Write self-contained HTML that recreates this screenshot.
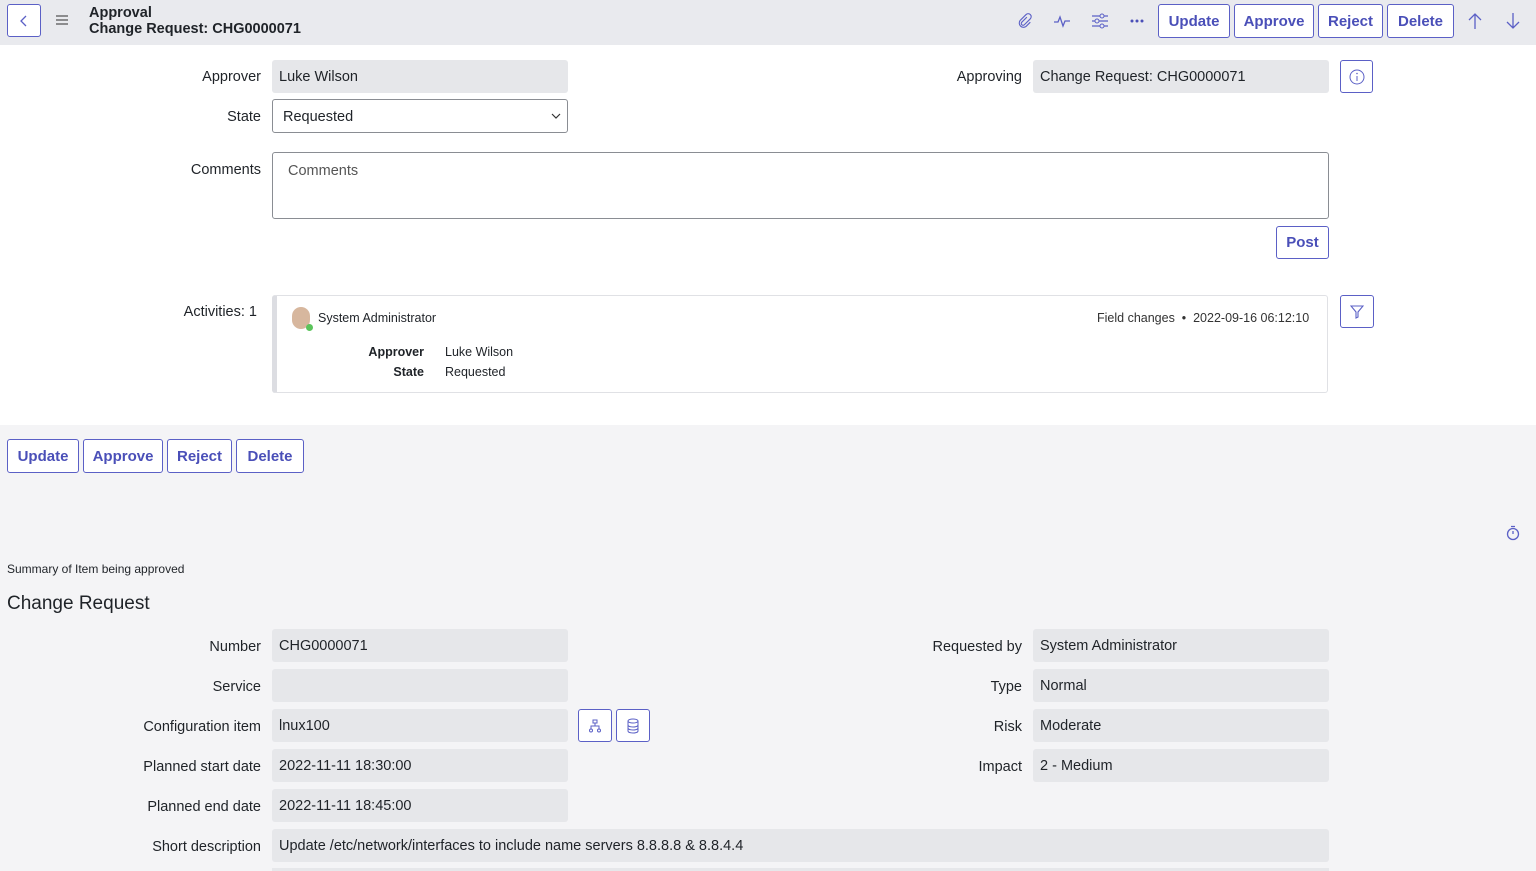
<!DOCTYPE html>
<html><head><meta charset="utf-8"><style>
*{box-sizing:border-box;margin:0;padding:0}
html{width:1536px;height:871px;overflow:hidden}
body{width:1536px;height:871px;overflow:hidden;font-family:"Liberation Sans",sans-serif;color:#1f2328;background:#fff;position:relative}
.a{position:absolute}
.hdr{left:0;top:0;width:1536px;height:45px;background:#e9eaee}
.btn{position:absolute;border:1px solid #5b60c6;border-radius:3px;color:#4a4fb8;font-weight:bold;font-size:15px;display:flex;align-items:center;justify-content:center;background:#fff}
.lbl{position:absolute;font-size:14.5px;text-align:right;color:#1f2328;white-space:nowrap}
.fld{position:absolute;background:#e6e7ea;border-radius:3px;font-size:14.5px;padding-left:7px;display:flex;align-items:center;height:33px;white-space:nowrap}
.ib{position:absolute;border:1px solid #5b60c6;border-radius:3px;background:#fff;display:flex;align-items:center;justify-content:center}
.gray{left:0;top:425px;width:1536px;height:446px;background:#f4f4f6}
</style></head><body>
<div class="a hdr"></div>
<div class="ib" style="left:7px;top:4px;width:34px;height:33px"><svg width="14" height="14" viewBox="0 0 14 14"><path d="M9 2L4 7l5 5" fill="none" stroke="#5b60c6" stroke-width="1.3"/></svg></div>
<svg class="a" style="left:56px;top:15px" width="12" height="10"><path d="M0 1h12M0 5h12M0 9h12" stroke="#555" stroke-width="1.2"/></svg>
<div class="a" style="left:89px;top:5px;font-size:14.5px;font-weight:bold;line-height:16px">Approval<br>Change Request: CHG0000071</div>
<svg class="a" style="left:1015px;top:12px" width="18" height="18" viewBox="0 0 18 18"><path d="M12 5l-6 6a2 2 0 003 3l7-7a3.5 3.5 0 00-5-5L4 9a5 5 0 007 7l5-5" fill="none" stroke="#5b60c6" stroke-width="1.3" transform="scale(.85) translate(2 1)"/></svg>
<svg class="a" style="left:1053px;top:12px" width="18" height="18"><path d="M1 10h4l2-5 3 9 2-5h5" fill="none" stroke="#5b60c6" stroke-width="1.3"/></svg>
<svg class="a" style="left:1091px;top:12px" width="18" height="18"><path d="M1 4h16M1 9h16M1 14h16" stroke="#5b60c6" stroke-width="1.2"/><circle cx="11" cy="4" r="2" fill="#e9eaee" stroke="#5b60c6"/><circle cx="6" cy="9" r="2" fill="#e9eaee" stroke="#5b60c6"/><circle cx="11" cy="14" r="2" fill="#e9eaee" stroke="#5b60c6"/></svg>
<svg class="a" style="left:1130px;top:19px" width="14" height="4"><circle cx="2" cy="2" r="1.5" fill="#4a4fb8"/><circle cx="7" cy="2" r="1.5" fill="#4a4fb8"/><circle cx="12" cy="2" r="1.5" fill="#4a4fb8"/></svg>
<div class="btn" style="left:1158px;top:4px;width:72px;height:34px">Update</div>
<div class="btn" style="left:1234px;top:4px;width:80px;height:34px">Approve</div>
<div class="btn" style="left:1318px;top:4px;width:65px;height:34px">Reject</div>
<div class="btn" style="left:1387px;top:4px;width:67px;height:34px">Delete</div>
<svg class="a" style="left:1467px;top:12px" width="16" height="18"><path d="M8 17V2M2 8l6-6 6 6" fill="none" stroke="#5b60c6" stroke-width="1.3"/></svg>
<svg class="a" style="left:1505px;top:12px" width="16" height="18"><path d="M8 1v15M2 10l6 6 6-6" fill="none" stroke="#5b60c6" stroke-width="1.3"/></svg>

<div class="lbl" style="right:1275px;top:69px">Approver</div>
<div class="fld" style="left:272px;top:60px;width:296px">Luke Wilson</div>
<div class="lbl" style="right:1275px;top:109px">State</div>
<div class="a" style="left:272px;top:99px;width:296px;height:34px;border:1px solid #8a8d93;border-radius:3px;font-size:14.5px;padding:9px 10px">Requested<svg style="position:absolute;right:6px;top:13px" width="10" height="7"><path d="M1 1l4 4 4-4" fill="none" stroke="#333" stroke-width="1.2"/></svg></div>
<div class="lbl" style="right:514px;top:69px">Approving</div>
<div class="fld" style="left:1033px;top:60px;width:296px">Change Request: CHG0000071</div>
<div class="ib" style="left:1340px;top:60px;width:33px;height:33px"><svg width="16" height="16"><circle cx="8" cy="8" r="7" fill="none" stroke="#5b60c6"/><path d="M8 7v5" stroke="#5b60c6"/><circle cx="8" cy="4.5" r=".8" fill="#5b60c6"/></svg></div>

<div class="lbl" style="right:1275px;top:162px">Comments</div>
<div class="a" style="left:272px;top:152px;width:1057px;height:67px;border:1px solid #8a8d93;border-radius:3px;font-size:14.5px;color:#555;padding:10px 15px">Comments</div>
<div class="btn" style="left:1276px;top:226px;width:53px;height:33px">Post</div>

<div class="lbl" style="right:1279px;top:304px">Activities: 1</div>
<div class="a" style="left:272px;top:295px;width:1056px;height:98px;border:1px solid #e0e1e5;border-left:5px solid #dcdde2;border-radius:3px"></div>
<div class="a" style="left:292px;top:307px;width:18px;height:22px;border-radius:9px;background:#d7b79e"></div>
<div class="a" style="left:306px;top:324px;width:7px;height:7px;border-radius:4px;background:#5bc45b"></div>
<div class="a" style="left:318px;top:311px;font-size:12.5px">System Administrator</div>
<div class="a" style="left:1097px;top:311px;font-size:12.5px;color:#333">Field changes &nbsp;•&nbsp; 2022-09-16 06:12:10</div>
<div class="a" style="left:344px;top:342px;width:80px;text-align:right;font-size:12.5px;font-weight:bold;line-height:20px">Approver<br>State</div>
<div class="a" style="left:445px;top:342px;font-size:12.5px;line-height:20px">Luke Wilson<br>Requested</div>
<div class="ib" style="left:1340px;top:295px;width:34px;height:33px"><svg width="14" height="14"><path d="M1 1h12L8 7v5l-2 1V7z" fill="none" stroke="#5b60c6" stroke-width="1.1"/></svg></div>

<div class="a gray"></div>
<div class="btn" style="left:7px;top:439px;width:72px;height:34px">Update</div>
<div class="btn" style="left:83px;top:439px;width:80px;height:34px">Approve</div>
<div class="btn" style="left:167px;top:439px;width:65px;height:34px">Reject</div>
<div class="btn" style="left:236px;top:439px;width:68px;height:34px">Delete</div>
<svg class="a" style="left:1505px;top:525px" width="16" height="16"><circle cx="8" cy="9" r="5.5" fill="none" stroke="#5b60c6" stroke-width="1.3"/><path d="M8 9V6M6 1.5h4" stroke="#5b60c6" stroke-width="1.3"/></svg>
<div class="a" style="left:7px;top:562px;font-size:12px">Summary of Item being approved</div>
<div class="a" style="left:7px;top:593px;font-size:19px">Change Request</div>

<div class="lbl" style="right:1275px;top:639px">Number</div>
<div class="fld" style="left:272px;top:629px;width:296px">CHG0000071</div>
<div class="lbl" style="right:1275px;top:679px">Service</div>
<div class="fld" style="left:272px;top:669px;width:296px"></div>
<div class="lbl" style="right:1275px;top:719px">Configuration item</div>
<div class="fld" style="left:272px;top:709px;width:296px">lnux100</div>
<div class="ib" style="left:578px;top:709px;width:34px;height:33px"><svg width="14" height="14"><rect x="5" y="1" width="4" height="3" fill="none" stroke="#5b60c6"/><path d="M7 4v3M3 10V7h8v3" fill="none" stroke="#5b60c6"/><circle cx="3" cy="11.5" r="1.5" fill="none" stroke="#5b60c6"/><circle cx="11" cy="11.5" r="1.5" fill="none" stroke="#5b60c6"/></svg></div>
<div class="ib" style="left:616px;top:709px;width:34px;height:33px"><svg width="14" height="16"><ellipse cx="7" cy="3" rx="5" ry="2" fill="none" stroke="#5b60c6"/><path d="M2 3v10c0 2.6 10 2.6 10 0V3M2 7c0 2.6 10 2.6 10 0M2 10c0 2.6 10 2.6 10 0" fill="none" stroke="#5b60c6"/></svg></div>
<div class="lbl" style="right:1275px;top:759px">Planned start date</div>
<div class="fld" style="left:272px;top:749px;width:296px">2022-11-11 18:30:00</div>
<div class="lbl" style="right:1275px;top:799px">Planned end date</div>
<div class="fld" style="left:272px;top:789px;width:296px">2022-11-11 18:45:00</div>
<div class="lbl" style="right:1275px;top:839px">Short description</div>
<div class="fld" style="left:272px;top:829px;width:1057px">Update /etc/network/interfaces to include name servers 8.8.8.8 &amp; 8.8.4.4</div>
<div class="a" style="left:272px;top:868px;width:1057px;height:3px;background:#e6e7ea"></div>

<div class="lbl" style="right:514px;top:639px">Requested by</div>
<div class="fld" style="left:1033px;top:629px;width:296px">System Administrator</div>
<div class="lbl" style="right:514px;top:679px">Type</div>
<div class="fld" style="left:1033px;top:669px;width:296px">Normal</div>
<div class="lbl" style="right:514px;top:719px">Risk</div>
<div class="fld" style="left:1033px;top:709px;width:296px">Moderate</div>
<div class="lbl" style="right:514px;top:759px">Impact</div>
<div class="fld" style="left:1033px;top:749px;width:296px">2 - Medium</div>
</body></html>
